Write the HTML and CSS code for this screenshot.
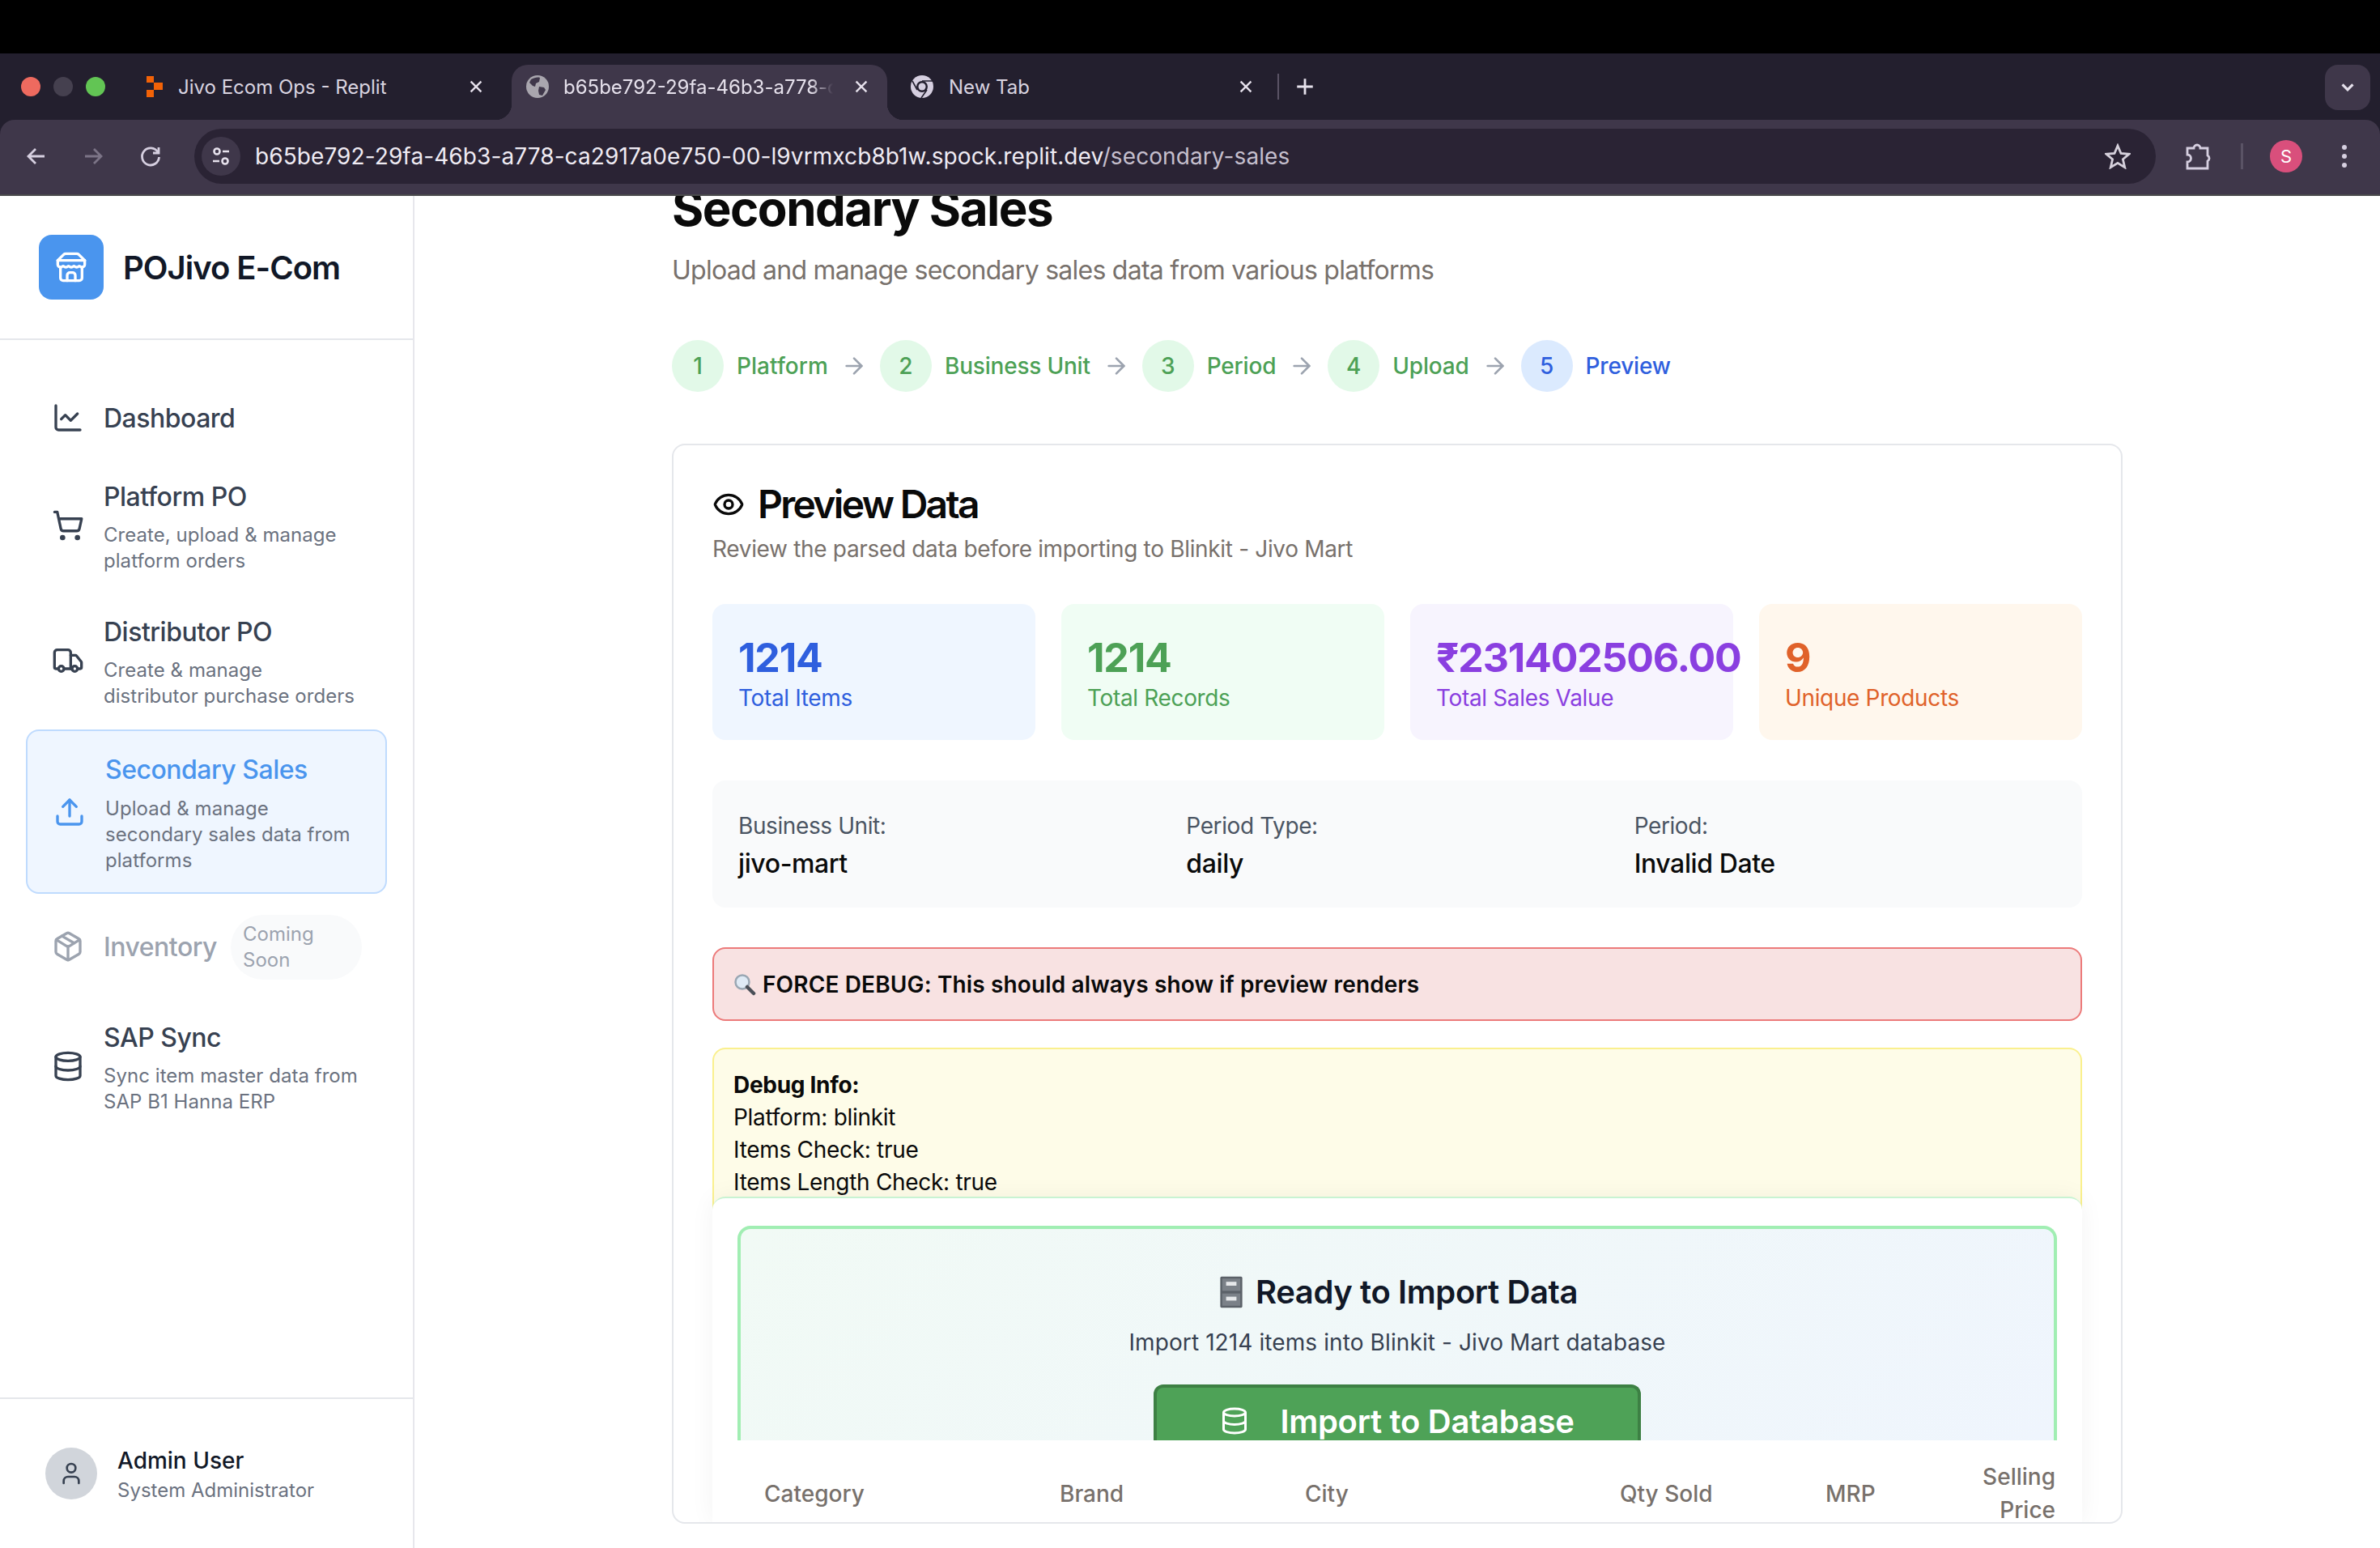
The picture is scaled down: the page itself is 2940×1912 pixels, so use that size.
FILE: index.html
```html
<!DOCTYPE html>
<html lang="en">
<head>
    <meta charset="UTF-8">
    <meta name="viewport" content="width=device-width, initial-scale=1.0">
    <title>Secondary Sales</title>
    <link rel="stylesheet" href="styles.css">
</head>
<body>
    <svg class="sprites" width="0" height="0">
        <symbol id="i-store" viewBox="0 0 24 24"><path d="m2 7 4.41-4.41A2 2 0 0 1 7.83 2h8.34a2 2 0 0 1 1.42.59L22 7"/><path d="M4 12v8a2 2 0 0 0 2 2h12a2 2 0 0 0 2-2v-8"/><path d="M15 22v-4a2 2 0 0 0-2-2h-2a2 2 0 0 0-2 2v4"/><path d="M2 7h20"/><path d="M22 7v3a2 2 0 0 1-2 2a2.7 2.7 0 0 1-1.59-.63.7.7 0 0 0-.82 0A2.7 2.7 0 0 1 16 12a2.7 2.7 0 0 1-1.59-.63.7.7 0 0 0-.82 0A2.7 2.7 0 0 1 12 12a2.7 2.7 0 0 1-1.59-.63.7.7 0 0 0-.82 0A2.7 2.7 0 0 1 8 12a2.7 2.7 0 0 1-1.59-.63.7.7 0 0 0-.82 0A2.7 2.7 0 0 1 4 12a2 2 0 0 1-2-2V7"/></symbol>
        <symbol id="i-chart" viewBox="0 0 24 24"><path d="M3 3v16a2 2 0 0 0 2 2h16"/><path d="m19 9-5 5-4-4-3 3"/></symbol>
        <symbol id="i-cart" viewBox="0 0 24 24"><circle cx="8" cy="21" r="1"/><circle cx="19" cy="21" r="1"/><path d="M2.05 2.05h2l2.66 12.42a2 2 0 0 0 2 1.58h9.78a2 2 0 0 0 1.95-1.57l1.65-7.43H5.12"/></symbol>
        <symbol id="i-truck" viewBox="0 0 24 24"><path d="M14 18V6a2 2 0 0 0-2-2H4a2 2 0 0 0-2 2v11a1 1 0 0 0 1 1h2"/><path d="M15 18H9"/><path d="M19 18h2a1 1 0 0 0 1-1v-3.65a1 1 0 0 0-.22-.624l-3.48-4.35A1 1 0 0 0 17.52 8H14"/><circle cx="17" cy="18" r="2"/><circle cx="7" cy="18" r="2"/></symbol>
        <symbol id="i-upload" viewBox="0 0 24 24"><path d="M21 15v4a2 2 0 0 1-2 2H5a2 2 0 0 1-2-2v-4"/><polyline points="17 8 12 3 7 8"/><line x1="12" y1="3" x2="12" y2="15"/></symbol>
        <symbol id="i-package" viewBox="0 0 24 24"><path d="M11 21.73a2 2 0 0 0 2 0l7-4A2 2 0 0 0 21 16V8a2 2 0 0 0-1-1.73l-7-4a2 2 0 0 0-2 0l-7 4A2 2 0 0 0 3 8v8a2 2 0 0 0 1 1.73z"/><path d="M12 22V12"/><path d="m3.3 7 7.703 4.734a2 2 0 0 0 1.994 0L20.7 7"/><path d="m7.5 4.27 9 5.15"/></symbol>
        <symbol id="i-database" viewBox="0 0 24 24"><ellipse cx="12" cy="5" rx="9" ry="3"/><path d="M3 5V19A9 3 0 0 0 21 19V5"/><path d="M3 12A9 3 0 0 0 21 12"/></symbol>
        <symbol id="i-user" viewBox="0 0 24 24"><path d="M19 21v-2a4 4 0 0 0-4-4H9a4 4 0 0 0-4 4v2"/><circle cx="12" cy="7" r="4"/></symbol>
        <symbol id="i-eye" viewBox="0 0 24 24"><path d="M2.062 12.348a1 1 0 0 1 0-.696 10.75 10.75 0 0 1 19.876 0 1 1 0 0 1 0 .696 10.75 10.75 0 0 1-19.876 0"/><circle cx="12" cy="12" r="3"/></symbol>
        <symbol id="i-arrow" viewBox="0 0 24 24"><path d="M5 12h14"/><path d="m12 5 7 7-7 7"/></symbol>
        <symbol id="i-close" viewBox="0 0 24 24"><path d="M5 5l14 14"/><path d="M19 5 5 19"/></symbol>
    </svg>

    <div class="top-black"></div>

    <header class="chrome">
        <div class="tabstrip">
            <div class="lights">
                <span class="light light-red"></span>
                <span class="light light-off"></span>
                <span class="light light-green"></span>
            </div>
            <div class="tab tab-first">
                <svg class="favicon" viewBox="0 0 22 28">
                    <path fill="#f26207" d="M1 1h9v8H1zM10 9h11v9H10zM1 18h9v9H1z"/>
                </svg>
                <span class="tab-title">Jivo Ecom Ops - Replit</span>
                <svg class="tab-close"><use href="#i-close"/></svg>
            </div>
            <div class="tab tab-active">
                <svg class="favicon" viewBox="0 0 28 28">
                    <circle cx="14" cy="14" r="14" fill="#a9a6ae"/>
                    <path fill="#3f374a" d="M6 5c4-2 8-3 11-2l-1 5-4 2-1 4-3-1-4-4zM16 14l6 1 2 3-4 7-4-1-1-5z"/>
                </svg>
                <span class="tab-title tab-title-fade">b65be792-29fa-46b3-a778-c</span>
                <svg class="tab-close"><use href="#i-close"/></svg>
            </div>
            <div class="tab tab-last">
                <svg class="favicon" viewBox="0 0 28 28">
                    <circle cx="14" cy="14" r="14" fill="#d6cfe0"/>
                    <circle cx="14" cy="14" r="7" fill="#231f2e"/>
                    <circle cx="14" cy="14" r="4.500" fill="#d6cfe0"/>
                    <path d="M14 7h13M8 18 2 7M20 18l-7 10" stroke="#231f2e" stroke-width="1.6" fill="none"/>
                </svg>
                <span class="tab-title">New Tab</span>
                <svg class="tab-close"><use href="#i-close"/></svg>
            </div>
            <span class="tab-sep"></span>
            <svg class="tab-plus" viewBox="0 0 24 24"><path d="M12 3v18M3 12h18"/></svg>
            <div class="tab-menu">
                <svg viewBox="0 0 24 24"><path d="m5 8 7 7 7-7"/></svg>
            </div>
        </div>

        <div class="toolbar">
            <svg class="tool-icon" viewBox="0 0 30 30"><path d="M25 15H6M14 6l-9 9 9 9"/></svg>
            <svg class="tool-icon tool-dim" viewBox="0 0 30 30"><path d="M5 15h19M16 6l9 9-9 9"/></svg>
            <svg class="tool-icon" viewBox="0 0 30 30"><path d="M24 10a10.500 10.500 0 1 0 1.500 6"/><path d="M25 4v7h-7"/></svg>
            <div class="omnibox">
                <span class="site-btn">
                    <svg viewBox="0 0 28 28"><circle cx="9" cy="8" r="3.500"/><path d="M16 8h8M4 20h8"/><circle cx="19" cy="20" r="3.500"/></svg>
                </span>
                <span class="url">b65be792-29fa-46b3-a778-ca2917a0e750-00-l9vrmxcb8b1w.spock.replit.dev<span class="url-path">/secondary-sales</span></span>
                <svg class="star" viewBox="0 0 32 32"><path d="m16 3 4 9.500 10 .8-7.600 6.500 2.300 9.900L16 24.400 7.300 29.700l2.300-9.900L2 13.300l10-.8z"/></svg>
            </div>
            <svg class="ext" viewBox="0 0 34 36"><path d="M4 8h8a4 4 0 0 1 8 0h9v9a4 4 0 0 1 0 7v9H4v-8a4.500 4.500 0 0 0 0-9z"/></svg>
            <span class="tool-sep"></span>
            <span class="profile">S</span>
            <span class="kebab"><i></i><i></i><i></i></span>
        </div>
    </header>

    <div class="app">
        <aside class="sidebar">
            <div class="brand">
                <span class="brand-logo"><svg class="icon"><use href="#i-store"/></svg></span>
                <span class="brand-name">POJivo E-Com</span>
            </div>

            <nav class="nav">
                <a class="nav-item nav-single">
                    <svg class="icon"><use href="#i-chart"/></svg>
                    <div class="nav-text"><div class="nav-title">Dashboard</div></div>
                </a>
                <a class="nav-item">
                    <svg class="icon"><use href="#i-cart"/></svg>
                    <div class="nav-text">
                        <div class="nav-title">Platform PO</div>
                        <div class="nav-desc">Create, upload &amp; manage platform orders</div>
                    </div>
                </a>
                <a class="nav-item">
                    <svg class="icon"><use href="#i-truck"/></svg>
                    <div class="nav-text">
                        <div class="nav-title">Distributor PO</div>
                        <div class="nav-desc">Create &amp; manage distributor purchase orders</div>
                    </div>
                </a>
                <a class="nav-item nav-active">
                    <svg class="icon"><use href="#i-upload"/></svg>
                    <div class="nav-text">
                        <div class="nav-title">Secondary Sales</div>
                        <div class="nav-desc">Upload &amp; manage secondary sales data from platforms</div>
                    </div>
                </a>
                <a class="nav-item nav-disabled">
                    <svg class="icon"><use href="#i-package"/></svg>
                    <div class="nav-title">Inventory</div>
                    <span class="soon">Coming Soon</span>
                </a>
                <a class="nav-item">
                    <svg class="icon"><use href="#i-database"/></svg>
                    <div class="nav-text">
                        <div class="nav-title">SAP Sync</div>
                        <div class="nav-desc">Sync item master data from SAP B1 Hanna ERP</div>
                    </div>
                </a>
            </nav>

            <div class="user">
                <span class="avatar"><svg class="icon"><use href="#i-user"/></svg></span>
                <div class="user-text">
                    <div class="user-name">Admin User</div>
                    <div class="user-role">System Administrator</div>
                </div>
            </div>
        </aside>

        <main class="main">
            <h1 class="page-title">Secondary Sales</h1>
            <p class="page-sub">Upload and manage secondary sales data from various platforms</p>

            <div class="steps">
                <span class="step-num">1</span><span class="step-label">Platform</span>
                <svg class="step-arrow"><use href="#i-arrow"/></svg>
                <span class="step-num">2</span><span class="step-label">Business Unit</span>
                <svg class="step-arrow"><use href="#i-arrow"/></svg>
                <span class="step-num">3</span><span class="step-label">Period</span>
                <svg class="step-arrow"><use href="#i-arrow"/></svg>
                <span class="step-num">4</span><span class="step-label">Upload</span>
                <svg class="step-arrow"><use href="#i-arrow"/></svg>
                <span class="step-num step-current">5</span><span class="step-label step-label-current">Preview</span>
            </div>

            <section class="card">
                <h2 class="card-title"><svg class="eye"><use href="#i-eye"/></svg>Preview Data</h2>
                <p class="card-sub">Review the parsed data before importing to Blinkit - Jivo Mart</p>

                <div class="stats">
                    <div class="stat stat-blue"><div class="stat-num">1214</div><div class="stat-label">Total Items</div></div>
                    <div class="stat stat-green"><div class="stat-num">1214</div><div class="stat-label">Total Records</div></div>
                    <div class="stat stat-purple"><div class="stat-num">₹231402506.00</div><div class="stat-label">Total Sales Value</div></div>
                    <div class="stat stat-orange"><div class="stat-num">9</div><div class="stat-label">Unique Products</div></div>
                </div>

                <div class="info">
                    <div><div class="info-label">Business Unit:</div><div class="info-value">jivo-mart</div></div>
                    <div><div class="info-label">Period Type:</div><div class="info-value">daily</div></div>
                    <div><div class="info-label">Period:</div><div class="info-value">Invalid Date</div></div>
                </div>

                <div class="force-debug">
                    <svg class="magnifier" viewBox="0 0 28 28">
                        <circle cx="11" cy="11" r="8.500" fill="#dfeaf5" stroke="#9aa7b3" stroke-width="2.500"/>
                        <path d="m17 17 8 8" stroke="#4a4f57" stroke-width="4.500" stroke-linecap="round"/>
                    </svg>
                    <span>FORCE DEBUG: This should always show if preview renders</span>
                </div>

                <div class="debug-info">
                    <div><strong>Debug Info:</strong></div>
                    <div>Platform: blinkit</div>
                    <div>Items Check: true</div>
                    <div>Items Length Check: true</div>
                </div>

                <!-- sticky panel, sits on top of the debug box -->
                <div class="sticky-panel">
                    <div class="import-box">
                        <h3 class="import-title">
                            <svg class="cabinet" viewBox="0 0 36 50">
                                <rect x="1" y="1" width="34" height="48" rx="2" fill="#5b6168"/>
                                <rect x="4" y="4" width="28" height="19" fill="#7b8188"/>
                                <rect x="4" y="27" width="28" height="19" fill="#7b8188"/>
                                <rect x="10" y="9" width="16" height="6" fill="#e6e8ea"/>
                                <rect x="10" y="32" width="16" height="6" fill="#e6e8ea"/>
                            </svg>
                            Ready to Import Data
                        </h3>
                        <p class="import-sub">Import 1214 items into Blinkit - Jivo Mart database</p>
                        <div class="import-btn"><svg class="btn-icon"><use href="#i-database"/></svg>Import to Database</div>
                    </div>
                    <div class="table-head">
                        <span>Category</span>
                        <span>Brand</span>
                        <span>City</span>
                        <span>Qty Sold</span>
                        <span>MRP</span>
                        <span class="th-right">Selling Price</span>
                    </div>
                </div>
            </section>
        </main>
    </div>
</body>
</html>
```

FILE: styles.css
```css
* {
    box-sizing: border-box;
}

html, body {
    width: 2940px;
    height: 1912px;
    margin: 0;
    padding: 0;
    overflow: hidden;
    background: #fff;
    font-family: Inter, "Liberation Sans", sans-serif;
}

.sprites {
    display: none;
}

.top-black {
    height: 66px;
    background: #000;
}

/* browser chrome */
.chrome {
    height: 176px;
    background: #231f2e;
    color: #e6e1ec;
    display: flex;
    flex-direction: column;
}

.tabstrip {
    height: 82px;
    display: flex;
    align-items: flex-end;
    position: relative;
}

.lights {
    display: flex;
    gap: 16px;
    padding-left: 26px;
    width: 162px;
    height: 68px;
    align-items: center;
    margin-top: 0;
    padding-bottom: 14px;
}

.light {
    width: 24px;
    height: 24px;
    border-radius: 50%;
}

.light-red { background: #ee6a5f; }
.light-off { background: #45404f; }
.light-green { background: #62c554; }

.tab {
    height: 68px;
    width: 464px;
    display: flex;
    align-items: center;
    font-size: 24px;
    padding-bottom: 14px;
    color: #d9d4e0;
    position: relative;
}

.tab-first { width: 470px; padding-left: 18px; padding-right: 33px; }
.tab-active { padding-left: 18px; padding-right: 21px; background: #3f374a; border-radius: 20px 20px 0 0; color: #e6e1ec; }
.tab-last { padding-left: 29px; padding-right: 10px; }

.tab-active::before,
.tab-active::after {
    content: "";
    position: absolute;
    bottom: 0;
    width: 20px;
    height: 20px;
}

.tab-active::before {
    left: -20px;
    background: radial-gradient(circle at 0 0, transparent 20px, #3f374a 20.5px);
}

.tab-active::after {
    right: -20px;
    background: radial-gradient(circle at 100% 0, transparent 20px, #3f374a 20.5px);
}

.favicon {
    width: 28px;
    height: 28px;
    flex: none;
    margin-right: 18px;
}

.tab-last .favicon { margin-right: 19px; }
.tab-first .favicon { width: 22px; margin-right: 18px; }

.tab-title {
    flex: 1;
    white-space: nowrap;
    overflow: hidden;
}

.tab-title-fade {
    -webkit-mask-image: linear-gradient(to right, #000 88%, transparent 96%);
    mask-image: linear-gradient(to right, #000 88%, transparent 96%);
}

.tab-close {
    width: 22px;
    height: 22px;
    flex: none;
    margin-left: 10px;
    fill: none;
    stroke: #e6e1ec;
    stroke-width: 2.6;
}

.tab-sep {
    width: 2px;
    height: 32px;
    background: #5a5365;
    margin: 0 0 25px 18px;
}

.tab-plus {
    width: 26px;
    height: 26px;
    margin: 0 0 28px 19px;
    fill: none;
    stroke: #e6e1ec;
    stroke-width: 2.6;
}

.tab-menu {
    width: 56px;
    height: 56px;
    margin: 0 12px 12px auto;
    border-radius: 16px;
    background: #3f374a;
    display: flex;
    align-items: center;
    justify-content: center;
}

.tab-menu svg {
    width: 22px;
    height: 22px;
    fill: none;
    stroke: #e6e1ec;
    stroke-width: 3.4;
}

.toolbar {
    height: 94px;
    background: #3f374a;
    border-radius: 18px 18px 0 0;
    border-bottom: 2px solid #4a4a4c;
    display: flex;
    align-items: center;
    padding: 0 0 2px 30px;
}

.tool-icon {
    width: 30px;
    height: 30px;
    margin-right: 40px;
    fill: none;
    stroke: #d6cfe0;
    stroke-width: 2.8;
    flex: none;
}

.tool-dim {
    stroke: #7c7487;
}

.tool-icon:nth-child(3) {
    margin-right: 0;
    margin-left: 1px;
}

.omnibox {
    width: 2423px;
    height: 68px;
    margin-left: 39px;
    border-radius: 34px;
    background: #2a2334;
    display: flex;
    align-items: center;
    padding-left: 9px;
    flex: none;
}

.site-btn {
    width: 48px;
    height: 48px;
    border-radius: 50%;
    background: #3f374a;
    display: flex;
    align-items: center;
    justify-content: center;
}

.site-btn svg {
    width: 28px;
    height: 28px;
    fill: none;
    stroke: #e6e1ec;
    stroke-width: 2.6;
}

.url {
    margin-left: 18px;
    font-size: 28px;
    letter-spacing: 0.09px;
    color: #efebf3;
    white-space: nowrap;
    flex: 1;
}

.url-path {
    color: #c5bfcd;
}

.star {
    width: 32px;
    height: 32px;
    margin-right: 31px;
    fill: none;
    stroke: #d6d1dc;
    stroke-width: 2.8;
    flex: none;
}

.ext {
    width: 34px;
    height: 36px;
    margin-left: 35px;
    fill: none;
    stroke: #d6cfe0;
    stroke-width: 2.8;
    flex: none;
}

.tool-sep {
    width: 3px;
    height: 32px;
    background: #5a5365;
    margin-left: 36px;
    flex: none;
}

.profile {
    width: 40px;
    height: 40px;
    margin-left: 33px;
    border-radius: 50%;
    background: #d94f7c;
    color: #fff;
    font-size: 22px;
    display: flex;
    align-items: center;
    justify-content: center;
    flex: none;
}

.kebab {
    display: flex;
    flex-direction: column;
    gap: 5px;
    margin-left: 49px;
    flex: none;
}

.kebab i {
    width: 6px;
    height: 6px;
    border-radius: 50%;
    background: #d6cfe0;
}

/* app */
.app {
    height: 1670px;
    display: flex;
}

.icon {
    width: 40px;
    height: 40px;
    flex: none;
    fill: none;
    stroke: currentColor;
    stroke-width: 2;
    stroke-linecap: round;
    stroke-linejoin: round;
}

.sidebar {
    width: 512px;
    flex: none;
    border-right: 2px solid #e7e7ec;
    display: flex;
    flex-direction: column;
}

.brand {
    height: 178px;
    padding: 0 0 0 48px;
    border-bottom: 2px solid #e5e7eb;
    display: flex;
    align-items: center;
    gap: 24px;
}

.brand-logo {
    width: 80px;
    height: 80px;
    border-radius: 16px;
    background: #4a95ee;
    color: #fff;
    display: flex;
    align-items: center;
    justify-content: center;
}

.brand-name {
    font-size: 40px;
    font-weight: 600;
    color: #111827;
    letter-spacing: -1px;
}

.nav {
    padding: 51px 32px 0;
    display: flex;
    flex-direction: column;
    gap: 3px;
}

.nav-item {
    display: flex;
    align-items: center;
    gap: 24px;
    padding: 24px 32px 23px;
    color: #374151;
}

.nav-item .icon {
    margin-top: -3px;
}

.nav-single {
    padding-bottom: 26px;
}

.nav-title {
    font-size: 32px;
    line-height: 44px;
    font-weight: 500;
    letter-spacing: -0.5px;
    color: #374151;
}

.nav-desc {
    margin-top: 9px;
    font-size: 24px;
    line-height: 32px;
    letter-spacing: 0.05px;
    color: #6b7280;
}

.nav-active {
    margin-top: -1px;
    padding: 26px 30px 23px 32px;
    background: #eff6ff;
    border: 2px solid #bfdbfe;
    border-radius: 16px;
    color: #4a95ee;
}

.nav-active .nav-title {
    color: #4a95ee;
}

.nav-active .nav-desc {
    margin-top: 10px;
}

.nav-disabled {
    padding: 23px 0 23px 32px;
    color: #9ca3af;
    gap: 24px;
}

.nav-disabled .nav-title {
    color: #9ca3af;
}

.soon {
    width: 162px;
    height: 80px;
    margin-left: -7px;
    padding: 0 15px;
    border-radius: 40px;
    background: #f9fafb;
    color: #9ca3af;
    font-size: 24px;
    line-height: 32px;
    display: flex;
    align-items: center;
}

.user {
    margin-top: auto;
    height: 186px;
    border-top: 2px solid #e5e7eb;
    padding: 0 0 0 56px;
    display: flex;
    align-items: center;
    gap: 25px;
}

.user-text {
    padding-top: 4px;
}

.avatar {
    width: 64px;
    height: 64px;
    border-radius: 50%;
    background: #d1d5db;
    color: #374151;
    display: flex;
    align-items: center;
    justify-content: center;
}

.avatar .icon {
    width: 32px;
    height: 32px;
}

.user-name {
    font-size: 28px;
    line-height: 38px;
    font-weight: 500;
    color: #111827;
}

.user-role {
    font-size: 24px;
    line-height: 36px;
    color: #6b7280;
}

/* main */
.main {
    flex: 1;
    overflow: hidden;
    padding: 0 318px 0 318px;
}

.page-title {
    margin: -21px 0 0;
    font-size: 60px;
    line-height: 72px;
    font-weight: 700;
    letter-spacing: -1.5px;
    color: #0a0a0a;
}

.page-sub {
    margin: 17px 0 0;
    font-size: 32px;
    line-height: 48px;
    letter-spacing: -0.74px;
    color: #78716c;
}

.steps {
    margin-top: 62px;
    display: flex;
    align-items: center;
    height: 64px;
}

.step-num {
    width: 64px;
    height: 64px;
    border-radius: 50%;
    background: #e2f9e8;
    color: #4da156;
    font-size: 28px;
    font-weight: 500;
    display: flex;
    align-items: center;
    justify-content: center;
    flex: none;
}

.step-label {
    margin-left: 16px;
    font-size: 28px;
    font-weight: 500;
    letter-spacing: -0.2px;
    color: #4da156;
}

.step-label:nth-child(2) {
    letter-spacing: 0.05px;
}

.step-arrow {
    width: 32px;
    height: 32px;
    margin: 0 16px;
    fill: none;
    stroke: #9ca3af;
    stroke-width: 2;
    stroke-linecap: round;
    stroke-linejoin: round;
}

.step-current {
    background: #dbeafe;
    color: #2f5fde;
}

.step-label-current {
    color: #2f5fde;
}

.card {
    position: relative;
    margin-top: 64px;
    height: 1334px;
    overflow: hidden;
    background: #fff;
    border: 2px solid #e5e7eb;
    border-radius: 16px;
    padding: 41px 48px 0;
}

.card-title {
    margin: 0;
    display: flex;
    align-items: center;
    gap: 16px;
    font-size: 48px;
    line-height: 64px;
    font-weight: 600;
    letter-spacing: -2.7px;
    color: #0a0a0a;
}

.eye {
    width: 40px;
    height: 40px;
    fill: none;
    stroke: #0a0a0a;
    stroke-width: 2;
}

.card-sub {
    margin: 3px 0 0;
    font-size: 28px;
    line-height: 40px;
    letter-spacing: -0.33px;
    color: #78716c;
}

.stats {
    margin-top: 48px;
    display: grid;
    grid-template-columns: repeat(4, minmax(0, 1fr));
    gap: 32px;
}

.stat {
    height: 168px;
    padding: 34px 32px 0;
    border-radius: 16px;
}

.stat-num {
    font-size: 50px;
    line-height: 64px;
    font-weight: 700;
    letter-spacing: -1.2px;
    white-space: nowrap;
}

.stat-label {
    margin-top: -2px;
    font-size: 28px;
    line-height: 40px;
    letter-spacing: -0.35px;
}

.stat-blue { background: #eff6ff; color: #2f5fde; }
.stat-green { background: #f0fdf4; color: #4da156; }
.stat-purple { background: #f7f4fe; color: #8a3fe0; }
.stat-orange { background: #fff7ed; color: #e0622a; }

.info {
    margin-top: 50px;
    height: 157px;
    padding: 36px 32px 0;
    border-radius: 16px;
    background: #f9fafb;
    display: grid;
    grid-template-columns: repeat(3, 1fr);
    gap: 32px;
}

.info-label {
    font-size: 28px;
    line-height: 40px;
    letter-spacing: -0.4px;
    color: #4b5563;
}

.info-value {
    margin-top: 3px;
    font-size: 32px;
    line-height: 48px;
    font-weight: 500;
    letter-spacing: -0.4px;
    color: #0a0a0a;
}

.force-debug {
    margin-top: 49px;
    height: 91px;
    padding: 0 24px;
    border: 2px solid #ec7a7a;
    border-radius: 16px;
    background: #f8e2e2;
    display: flex;
    align-items: center;
    gap: 8px;
    font-size: 28px;
    font-weight: 600;
    letter-spacing: 0.14px;
    color: #0a0a0a;
}

.magnifier {
    width: 28px;
    height: 28px;
    flex: none;
}

.debug-info {
    margin-top: 33px;
    height: 300px;
    padding: 24px;
    border: 2px solid #faf08e;
    border-radius: 16px;
    background: #fefce8;
    font-size: 28px;
    line-height: 40px;
    letter-spacing: -0.3px;
    color: #0a0a0a;
}

.debug-info strong {
    font-weight: 700;
}

.sticky-panel {
    position: absolute;
    top: 928px;
    left: 48px;
    right: 48px;
    bottom: 0;
    padding: 34px 31px 0 31px;
    background: #fff;
    border-top: 2px solid #c8f3d2;
    border-radius: 16px 16px 0 0;
    box-shadow: 0 0 30px rgba(0, 0, 0, 0.05);
}

.import-box {
    height: 265px;
    overflow: hidden;
    padding-top: 50px;
    border: 4px solid #a1eeb3;
    border-bottom: 0;
    border-radius: 16px 16px 0 0;
    background: linear-gradient(135deg, #f1faf5, #eff5fd);
    text-align: center;
}

.import-title {
    margin: 0;
    display: flex;
    align-items: center;
    justify-content: center;
    gap: 12px;
    font-size: 40px;
    line-height: 56px;
    font-weight: 600;
    color: #111827;
    letter-spacing: -0.4px;
}

.cabinet {
    width: 36px;
    height: 40px;
}

.import-sub {
    margin: 12px 0 0;
    font-size: 28px;
    line-height: 44px;
    letter-spacing: 0.1px;
    color: #374151;
}

.import-btn {
    margin: 30px auto 0;
    width: 602px;
    height: 110px;
    padding-bottom: 24px;
    border: 4px solid #3d8044;
    border-bottom: 0;
    border-radius: 12px 12px 0 0;
    background: #4ea257;
    color: #fff;
    display: flex;
    align-items: center;
    justify-content: center;
    gap: 38px;
    font-size: 40px;
    font-weight: 600;
    letter-spacing: -0.3px;
}

.btn-icon {
    width: 36px;
    height: 36px;
    fill: none;
    stroke: #fff;
    stroke-width: 2;
}

.table-head {
    padding: 25px 2px 0 33px;
    display: grid;
    grid-template-columns: 365px 303px 389px 254px 1fr 130px;
    align-items: center;
    font-size: 28px;
    line-height: 41px;
    font-weight: 500;
    color: #78716c;
}

.th-right {
    text-align: right;
}
```
